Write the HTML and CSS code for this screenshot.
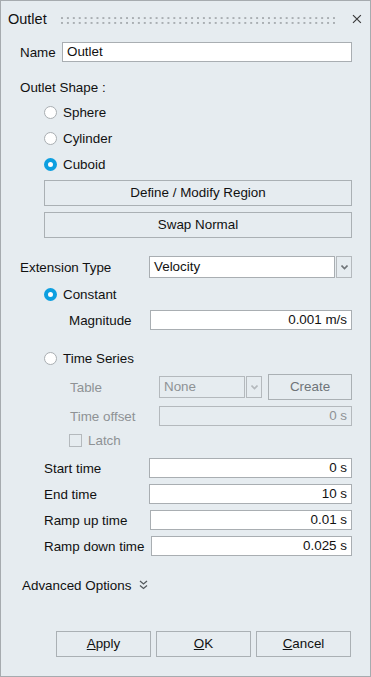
FILE: index.html
```html
<!DOCTYPE html>
<html lang="en">
<head>
  <meta charset="UTF-8" />
  <title>Outlet</title>
  <meta name="viewport" content="width=device-width, initial-scale=1.0" />
  <link rel="stylesheet" href="styles.css">
</head>
<body>
  <div class="dialog">
    <div class="title-bar">
      <span class="title">Outlet</span>
      <svg class="grip" width="280" height="7" viewBox="0 0 280 7">
        <defs>
          <pattern id="dots" width="6" height="5" patternUnits="userSpaceOnUse">
            <rect x="0" y="0" width="2" height="2" fill="#a9aeb2" />
          </pattern>
        </defs>
        <rect width="280" height="7" fill="url(#dots)" />
      </svg>
      <svg class="close" width="10" height="10" viewBox="0 0 10 10">
        <path d="M1 1 L9 9 M9 1 L1 9" stroke="#3a3a3a" stroke-width="1.2" fill="none" />
      </svg>
    </div>

    <div class="content">
      <div class="row name-row">
        <label class="name-label">Name</label>
        <div class="field grow">Outlet</div>
      </div>

      <div class="section-label">Outlet Shape :</div>
      <div class="radio-list">
        <div class="radio-row"><span class="radio"></span>Sphere</div>
        <div class="radio-row"><span class="radio"></span>Cylinder</div>
        <div class="radio-row"><span class="radio checked"></span>Cuboid</div>
      </div>
      <div class="btn wide first">Define / Modify Region</div>
      <div class="btn wide second">Swap Normal</div>

      <div class="row ext-row">
        <label class="ext-label">Extension Type</label>
        <div class="select grow">
          <div class="select-value">Velocity</div>
          <div class="select-arrow"><svg width="7" height="5" viewBox="0 0 7 5"><path d="M0.5 0.5 L3.5 3.5 L6.5 0.5" stroke="#707579" stroke-width="1.6" fill="none" /></svg></div>
        </div>
      </div>

      <div class="radio-row indent constant"><span class="radio checked"></span>Constant</div>
      <div class="row sub-row magnitude">
        <label class="mag-label">Magnitude</label>
        <div class="field grow right">0.001 m/s</div>
      </div>

      <div class="radio-row indent series"><span class="radio"></span>Time Series</div>
      <div class="row sub-row table-row disabled">
        <label class="ts-label">Table</label>
        <div class="select small">
          <div class="select-value">None</div>
          <div class="select-arrow"><svg width="7" height="5" viewBox="0 0 7 5"><path d="M0.5 0.5 L3.5 3.5 L6.5 0.5" stroke="#b4b9bd" stroke-width="1.6" fill="none" /></svg></div>
        </div>
        <div class="btn create">Create</div>
      </div>
      <div class="row sub-row offset-row disabled">
        <label class="ts-label">Time offset</label>
        <div class="field grow right off">0 s</div>
      </div>
      <div class="row latch-row disabled">
        <span class="checkbox"></span>Latch
      </div>

      <div class="times">
        <div class="row time-row">
          <label class="time-label">Start time</label>
          <div class="field grow right">0 s</div>
        </div>
        <div class="row time-row">
          <label class="time-label">End time</label>
          <div class="field grow right">10 s</div>
        </div>
        <div class="row time-row">
          <label class="time-label up">Ramp up time</label>
          <div class="field grow right">0.01 s</div>
        </div>
        <div class="row time-row">
          <label class="time-label down">Ramp down time</label>
          <div class="field grow right">0.025 s</div>
        </div>
      </div>

      <div class="advanced">
        Advanced Options
        <svg width="9" height="10" viewBox="0 0 9 10"><path d="M1 1 L4.5 4 L8 1 M1 5.5 L4.5 8.5 L8 5.5" stroke="#555a5e" stroke-width="1.3" fill="none" /></svg>
      </div>

      <div class="actions">
        <div class="btn action"><u>A</u>pply</div>
        <div class="btn action"><u>O</u>K</div>
        <div class="btn action"><u>C</u>ancel</div>
      </div>
    </div>
  </div>
</body>
</html>
```

FILE: styles.css
```css
* {
  box-sizing: border-box;
  margin: 0;
  padding: 0;
  font-family: 'Liberation Sans', Arial, sans-serif;
}
body {
  background: #e6ecf0;
  font-size: 13.4px;
  color: #111;
}
.dialog {
  width: 371px;
  height: 677px;
  border: 1px solid #a6abaf;
  background: #e6ecf0;
}
.title-bar {
  height: 36px;
  display: flex;
  align-items: center;
  padding: 0 8px 0 7px;
}
.title {
  font-size: 14.5px;
  width: 54px;
}
.grip {
  margin-top: 2px;
}
.close {
  margin-left: 15px;
}
.content {
  padding: 0 18px 0 19px;
}
.row {
  display: flex;
  align-items: center;
}
.grow {
  flex: 1;
}
.field {
  height: 20px;
  line-height: 18px;
  background: white;
  border: 1px solid #a9aeb2;
  padding: 0 4px;
}
.field.right {
  text-align: right;
}
.field.off {
  background: #e6ecf0;
  border-color: #b4b9bd;
}
.name-row {
  margin-top: 5px;
}
.name-label {
  width: 42px;
}
.section-label {
  margin-top: 17px;
  line-height: 18px;
}
.radio-list {
  margin-top: 2px;
}
.radio-row {
  height: 26px;
  display: flex;
  align-items: center;
  padding-left: 24px;
}
.radio {
  width: 13px;
  height: 13px;
  border-radius: 50%;
  border: 1px solid #a9aeb2;
  background: white;
  margin-right: 6px;
}
.radio.checked {
  border: 4px solid #0d9fe0;
}
.btn {
  height: 26px;
  line-height: 24px;
  border: 1px solid #aab0b4;
  text-align: center;
  background: #e6ecf0;
}
.btn.wide {
  margin-left: 24px;
}
.btn.first {
  margin-top: 3px;
}
.btn.second {
  margin-top: 6px;
}
.ext-row {
  margin-top: 18px;
}
.ext-label {
  width: 129px;
}
.select {
  height: 22px;
  display: flex;
}
.select-value {
  flex: 1;
  background: white;
  border: 1px solid #a9aeb2;
  line-height: 20px;
  padding: 0 4px;
}
.select-arrow {
  width: 16px;
  border: 1px solid #b4b9bd;
  margin-left: 1px;
  display: flex;
  align-items: center;
  justify-content: center;
}
.radio-row.indent.constant {
  margin-top: 3px;
}
.sub-row {
  padding-left: 49px;
}
.magnitude {
  margin-top: 3px;
}
.mag-label {
  width: 81px;
}
.radio-row.indent.series {
  margin-top: 15px;
}
.disabled {
  color: #8e9295;
}
.table-row {
  margin-top: 3px;
  padding-left: 50px;
}
.ts-label {
  width: 89px;
}
.select.small {
  width: 103px;
}
.table-row .select-value {
  background: #e6ecf0;
  border-color: #b4b9bd;
}
.btn.create {
  flex: 1;
  margin-left: 6px;
  color: #6f7478;
}
.offset-row {
  margin-top: 6px;
  padding-left: 50px;
}
.latch-row {
  height: 20px;
  margin-top: 4px;
  padding-left: 49px;
}
.checkbox {
  width: 13px;
  height: 13px;
  border: 1px solid #b4b9bd;
  margin-right: 6px;
}
.times {
  margin-top: 8px;
  padding-left: 24px;
  display: flex;
  flex-direction: column;
  gap: 6px;
}
.time-label {
  width: 105px;
}
.time-label.up {
  width: 106px;
}
.time-label.down {
  width: 107px;
}
.advanced {
  margin-top: 20px;
  margin-left: 2px;
  height: 18px;
  display: flex;
  align-items: center;
  gap: 8px;
}
.actions {
  margin-top: 37px;
  margin-right: 1px;
  display: flex;
  justify-content: flex-end;
  gap: 5px;
}
.btn.action {
  width: 95px;
}
```
